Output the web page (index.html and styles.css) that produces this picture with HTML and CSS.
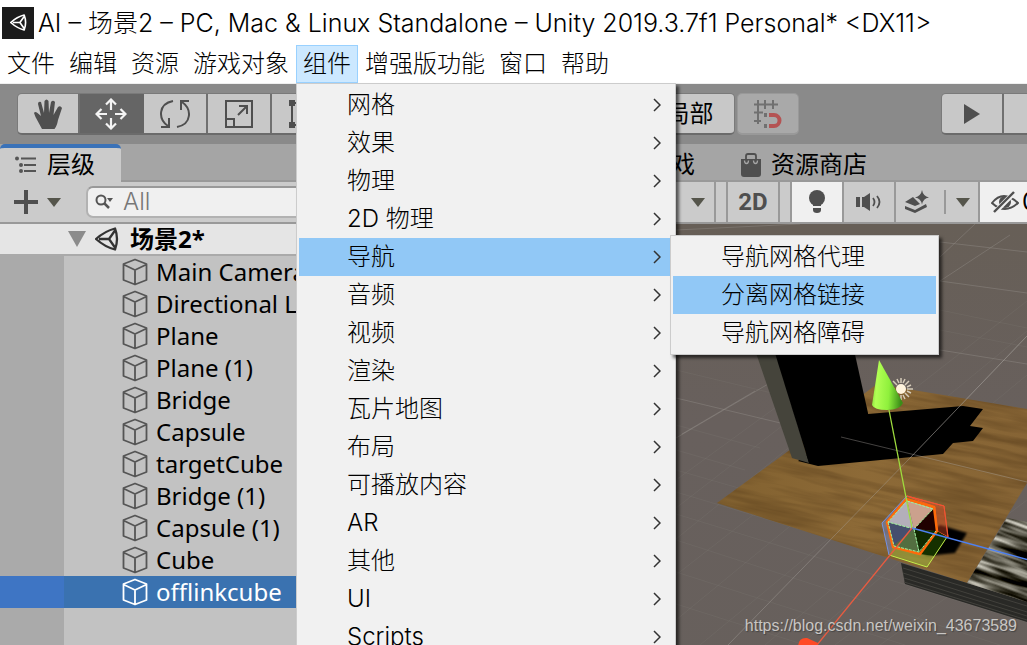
FILE: index.html
```
<!DOCTYPE html>
<html lang="zh-CN">
<head>
  <meta charset="UTF-8" />
  <meta name="viewport" content="width=device-width,initial-scale=1.0"/>
  <title>AI – 场景2 – Unity 2019.3.7f1 Personal</title>
  <link rel="stylesheet" href="styles.css">
</head>
<body>
  <!-- Shared icons -->
  <svg class="defs" aria-hidden="true">
    <symbol id="cube" viewBox="0 0 26 28">
      <path d="M13 1.500 24.500 6v16L13 26.500 1.500 22V6Z M1.500 6.500 13 12 24.500 6.500 M13 12v14" fill="none" stroke="currentColor" stroke-width="1.800" stroke-linejoin="round"/>
    </symbol>
    <symbol id="unity" viewBox="0 0 24 24">
      <path d="M1 12Q10 4 20 1.500 24 12 20 22.500 10 20 1 12Z M4 12h10 M20 3.500 14 12 20 20.500" fill="none" stroke="currentColor" stroke-width="2.300" stroke-linejoin="round"/>
    </symbol>
    <symbol id="arrow" viewBox="0 0 14 9">
      <path d="M0 0h14L7 9Z" fill="#55554b"/>
    </symbol>
    <symbol id="chevron" viewBox="0 0 8 14">
      <path d="M1 1l6 6-6 6" fill="none" stroke="#333" stroke-width="1.500"/>
    </symbol>
  </svg>

  <header class="titlebar">
    <span class="app-icon"><svg width="17" height="17"><use href="#unity"/></svg></span>
    <h1>AI – 场景2 – PC, Mac &amp; Linux Standalone – Unity 2019.3.7f1 Personal* &lt;DX11&gt;</h1>
  </header>

  <nav class="menubar">
    <button>文件</button>
    <button>编辑</button>
    <button>资源</button>
    <button>游戏对象</button>
    <div class="menu-holder">
      <button class="open">组件</button>
      <div class="menu main-menu">
        <button>网格<svg><use href="#chevron"/></svg></button>
        <button>效果<svg><use href="#chevron"/></svg></button>
        <button>物理<svg><use href="#chevron"/></svg></button>
        <button>2D 物理<svg><use href="#chevron"/></svg></button>
        <div class="menu-holder">
          <button class="active">导航<svg><use href="#chevron"/></svg></button>
          <div class="menu sub-menu">
            <button>导航网格代理</button>
            <button class="active">分离网格链接</button>
            <button>导航网格障碍</button>
          </div>
        </div>
        <button>音频<svg><use href="#chevron"/></svg></button>
        <button>视频<svg><use href="#chevron"/></svg></button>
        <button>渲染<svg><use href="#chevron"/></svg></button>
        <button>瓦片地图<svg><use href="#chevron"/></svg></button>
        <button>布局<svg><use href="#chevron"/></svg></button>
        <button>可播放内容<svg><use href="#chevron"/></svg></button>
        <button>AR<svg><use href="#chevron"/></svg></button>
        <button>其他<svg><use href="#chevron"/></svg></button>
        <button>UI<svg><use href="#chevron"/></svg></button>
        <button>Scripts<svg><use href="#chevron"/></svg></button>
      </div>
    </div>
    <button>增强版功能</button>
    <button>窗口</button>
    <button>帮助</button>
  </nav>

  <!-- Main toolbar -->
  <div class="toolbar">
    <div class="group tools">
      <button aria-label="Hand">
        <svg width="30" height="32" viewBox="0 0 30 32"><path d="M9 31 2.500 19 1 15q1-2 3.500 0L8 18 5 6q0-3 3-2l3 11L11.500 3q2-3 4 0L16 15 18 4q2-2.500 4 0L20.500 17 25 9q2.500-2 4 1L25 22q-1 6-3.500 9Z" fill="#4f4f4f"/></svg>
      </button>
      <button class="on" aria-label="Move">
        <svg width="32" height="32" viewBox="0 0 32 32"><path d="M16 12V2M11 6.500l5-5 5 5M16 20v10M11 25.500l5 5 5-5M12 16H2M6.500 11l-5 5 5 5M20 16h10M25.500 11l5 5-5 5" fill="none" stroke="#f4f4f4" stroke-width="2.200"/></svg>
      </button>
      <button aria-label="Rotate">
        <svg width="30" height="30" viewBox="0 0 30 30"><path d="M13 2C-2 5-2 20 8 27M1 28h8v-9M17 28C32 25 32 10 22 3M29 2h-8v9" fill="none" stroke="#4f4f4f" stroke-width="2"/></svg>
      </button>
      <button aria-label="Scale">
        <svg width="30" height="30" viewBox="0 0 30 30"><path d="M2 2h26v26H2ZM2 20h8v8M14 16l9-9M15 7h8v8" fill="none" stroke="#4f4f4f" stroke-width="2"/></svg>
      </button>
      <button aria-label="Rect">
        <svg width="30" height="30" viewBox="0 0 30 30"><path d="M4 4h22v22H4Z" fill="none" stroke="#4f4f4f" stroke-width="2"/><path d="M1 1h6v6H1ZM23 1h6v6h-6ZM1 23h6v6H1ZM23 23h6v6h-6Z" fill="#4f4f4f"/></svg>
      </button>
      <button aria-label="Transform"></button>
    </div>
    <div class="group pivot">
      <button>中心</button>
      <button>局部</button>
    </div>
    <div class="group snap">
      <button aria-label="Snap" disabled>
        <svg width="30" height="30" viewBox="0 0 30 30"><path d="M1 5.500h24M5 1v24M12 1v9M20 1v9M1 13.500h9M1 22h7" fill="none" stroke="#707070" stroke-width="2"/><path d="M11 14h3v4h-3ZM11 25h3v4h-3Z" fill="#707070"/><path d="M16 16h5a5 5 0 0 1 0 11h-5" fill="none" stroke="#b45353" stroke-width="4"/></svg>
      </button>
    </div>
    <div class="group play">
      <button aria-label="Play"><svg width="18" height="20" viewBox="0 0 18 20"><path d="M1 0 17 10 1 20Z" fill="#4f4f4f"/></svg></button>
      <button aria-label="Pause"><svg width="18" height="20" viewBox="0 0 18 20"><path d="M2 0h5v20H2ZM11 0h5v20h-5Z" fill="#4f4f4f"/></svg></button>
    </div>
  </div>

  <main class="workspace">
    <!-- Hierarchy -->
    <section class="hierarchy">
      <div class="tabs">
        <button class="tab current">
          <svg width="22" height="18" viewBox="0 0 22 18"><path d="M6 2.500h15M9 9h12M9 15h12" stroke="#555" stroke-width="2"/><circle cx="2" cy="2.500" r="2" fill="#555"/><circle cx="6" cy="9" r="2" fill="#555"/><circle cx="6" cy="15" r="2" fill="#555"/></svg>
          层级
        </button>
      </div>
      <div class="panel-bar">
        <button class="add" aria-label="Add">
          <svg width="24" height="24" viewBox="0 0 24 24"><path d="M12 0v24M0 12h24" stroke="#4f4f4f" stroke-width="4"/></svg>
          <svg width="14" height="9"><use href="#arrow"/></svg>
        </button>
        <label class="search">
          <svg width="19" height="16" viewBox="0 0 19 16"><circle cx="6" cy="6" r="4.500" fill="none" stroke="#555" stroke-width="2"/><path d="M9 9l5 5" stroke="#555" stroke-width="2.500"/><path d="M12 4h6l-3 4Z" fill="#555"/></svg>
          <input type="text" placeholder="All" aria-label="Search">
        </label>
      </div>
      <div class="scene-row">
        <svg width="18" height="16" viewBox="0 0 18 16"><path d="M0 0h18L9 16Z" fill="#8b8b8b"/></svg>
        <svg class="logo" width="24" height="24"><use href="#unity"/></svg>
        <span>场景2*</span>
      </div>
      <ul class="tree">
        <li><svg><use href="#cube"/></svg>Main Camera</li>
        <li><svg><use href="#cube"/></svg>Directional Light</li>
        <li><svg><use href="#cube"/></svg>Plane</li>
        <li><svg><use href="#cube"/></svg>Plane (1)</li>
        <li><svg><use href="#cube"/></svg>Bridge</li>
        <li><svg><use href="#cube"/></svg>Capsule</li>
        <li><svg><use href="#cube"/></svg>targetCube</li>
        <li><svg><use href="#cube"/></svg>Bridge (1)</li>
        <li><svg><use href="#cube"/></svg>Capsule (1)</li>
        <li><svg><use href="#cube"/></svg>Cube</li>
        <li class="selected"><svg><use href="#cube"/></svg>offlinkcube</li>
      </ul>
    </section>

    <!-- Scene view -->
    <section class="scene">
      <div class="tabs">
        <button class="tab"><svg width="20" height="24"></svg>场景</button>
        <button class="tab"><svg width="20" height="24"></svg>游戏</button>
        <button class="tab">
          <svg width="20" height="24" viewBox="0 0 20 24"><path d="M5 7V3q0-2 2-2h6q2 0 2 2v4" fill="none" stroke="#4f4f4f" stroke-width="1.800"/><path d="M0 6h20v15q0 3-3 3H3q-3 0-3-3Z" fill="#4f4f4f"/><path d="M3.500 7.500q0 3 2 3t2-3M12.500 7.500q0 3 2 3t2-3" fill="none" stroke="#a5a5a5" stroke-width="1.300"/></svg>
          资源商店
        </button>
      </div>
      <div class="view-bar">
        <button class="shading" aria-label="Shading mode"><svg width="14" height="9"><use href="#arrow"/></svg></button>
        <button class="mode">2D</button>
        <button class="light on" aria-label="Lighting">
          <svg width="18" height="24" viewBox="0 0 18 24"><circle cx="9" cy="8" r="8" fill="#4f4f4f"/><path d="M5 13h8v3H5ZM5 18h8v2q0 3-4 3t-4-3Z" fill="#4f4f4f"/></svg>
        </button>
        <button class="sound" aria-label="Audio">
          <svg width="26" height="20" viewBox="0 0 26 20"><path d="M0 5h4v10H0ZM6 5h2l6-4v18l-6-4H6Z" fill="#4f4f4f"/><path d="M17 6q3 4 0 8M21 4q5 6 0 12" fill="none" stroke="#4f4f4f" stroke-width="1.800"/></svg>
        </button>
        <button class="effects" aria-label="Effects">
          <svg width="26" height="24" viewBox="0 0 26 24"><path d="M18 0q1 6 7 7.500-6 1-7 7-1-6-7-7Q17 6 18 0ZM9 7l3 3 4 4-5 2L1 12ZM1 16l10 4 11-6 1 3-12 6L1 19Z" fill="#4f4f4f"/></svg>
          <span class="split"></span>
          <svg width="14" height="9"><use href="#arrow"/></svg>
        </button>
        <button class="hidden-count on">
          <svg width="28" height="22" viewBox="0 0 28 22"><path d="M1 12Q12-2 27 12 14 24 1 12Z" fill="none" stroke="#4f4f4f" stroke-width="2"/><circle cx="14" cy="11" r="6" fill="#4f4f4f"/><path d="M4 21 24 1" stroke="#f0f0f0" stroke-width="5"/><path d="M3 21 23 1" stroke="#4f4f4f" stroke-width="2.400"/></svg>
          0
        </button>
      </div>
      <div class="viewport">
        <svg viewBox="470 224 557 421" preserveAspectRatio="xMinYMin slice">
          <defs>
            <linearGradient id="ground" x1="0" y1="0" x2="0" y2="1">
              <stop offset="0" stop-color="#675f57"/><stop offset=".4" stop-color="#68605d"/><stop offset="1" stop-color="#67605c"/>
            </linearGradient>
            <linearGradient id="cone" x1="0" y1="0" x2="1" y2="0.100">
              <stop offset="0" stop-color="#79d233"/><stop offset=".2" stop-color="#b2ff54"/><stop offset=".6" stop-color="#8ff03c"/><stop offset="1" stop-color="#3b8d18"/>
            </linearGradient>
            <linearGradient id="plank" x1="0" y1="0" x2="1" y2="0">
              <stop offset="0" stop-color="#80602f"/><stop offset=".5" stop-color="#8d6a37"/><stop offset="1" stop-color="#866435"/>
            </linearGradient>
            <filter id="soft"><feGaussianBlur stdDeviation="1"/></filter>
            <filter id="grain" x="0" y="0" width="1" height="1" color-interpolation-filters="sRGB">
              <feTurbulence type="fractalNoise" baseFrequency="0.012 0.140" numOctaves="3" seed="4"/>
              <feColorMatrix values="0 0 0 0 .3  0 0 0 0 .2  0 0 0 0 .08  1 0 0 0 -.35"/>
            </filter>
            <filter id="rough" x="0" y="0" width="1" height="1" color-interpolation-filters="sRGB">
              <feTurbulence type="fractalNoise" baseFrequency="0.018 0.160" numOctaves="2" seed="9"/>
              <feColorMatrix values="2 0 0 0 -.640  2 0 0 0 -.650  2 0 0 0 -.700  0 0 0 0 1"/>
            </filter>
            <clipPath id="wood"><path d="M717 503 787 452 877 384 1027 409V483L967 583Z"/></clipPath>
            <clipPath id="stone"><path d="M1007 518 1040 524V606L967 583Z"/></clipPath>
          </defs>
          <rect x="470" y="224" width="700" height="500" fill="url(#ground)"/>
          <!-- floor grid -->
          <g fill="none" stroke="#96928d" stroke-opacity=".4">
            <path d="M940 242 1027 252M940 281 1027 293M676 398 1027 482M676 230 800 224M940 281 1010 235M940 257 975 224M676 438 775 380M940 350 1027 364M682 434 755 391"/>
          </g>
          <g fill="none" stroke="#96928d" stroke-opacity=".13">
            <path d="M676 470 940 546M676 492 900 559M676 514 1027 622M676 540 1000 645M676 572 905 645M676 604 805 645M676 425 760 448M676 450 745 470M940 310 1027 328M940 330 1027 347M676 480 790 397M676 508 800 412M676 539 850 398M676 575 1027 301M676 620 1027 331M700 645 1027 375M765 645 1027 425M800 645 1027 455M835 645 1027 500M880 645 1027 540M676 370 780 395"/>
          </g>
          <!-- wooden plane -->
          <g clip-path="url(#wood)">
            <rect x="700" y="380" width="330" height="210" fill="url(#plank)"/>
            <rect x="680" y="300" width="420" height="340" filter="url(#grain)" transform="rotate(12 860 480)"/>
          </g>
          <!-- stone block -->
          <path d="M901 563 967 583 1040 606V626L905 584Z" fill="#292926"/>
          <path d="M903 568 1027 606M903 573 1027 612M904 578 1027 616M904 582 1027 620" stroke="#42413c" stroke-width="1" fill="none"/>
          <g clip-path="url(#stone)">
            <rect x="930" y="490" width="150" height="150" filter="url(#rough)" transform="rotate(20 1000 560)"/>
          </g>
          <!-- pillar and shadow -->
          <path d="M860 414 868 414 963 406 983 409 970 426 983 428 973 441 953 443 943 454 818 466 798 461Z"/>
          <path d="M755 350H775L809 463 792 458Z" fill="#45443b"/>
          <path d="M774 350H854L868 413 870 445 809 463Z"/>
          <path d="M940 525 967 533 955 553 927 556 910 545Z" filter="url(#soft)"/>
          <path d="M1027 336 910 458 728 645M841 437 1027 482" stroke="#a9a6a0" stroke-opacity=".4" fill="none"/>
          <path d="M1027 336 910 458" stroke="#a9a6a0" stroke-opacity=".3" fill="none"/>
          <!-- light gizmo -->
          <path d="M901 378v5M901 395v5M890 389h5M907 389h6M893 381l4 4M905 393l4 4M893 397l4-4M905 385l4-4M897 379l2 4M905 379l-2 4M911 385l-4 2M911 393l-4-2M905 399l-2-4" stroke="#d5cbb9" stroke-width="1.500"/>
          <circle cx="901" cy="389" r="5" fill="#fff3dc"/>
          <!-- selected cube -->
          <path d="M907 496 944 506 948 537 937 531 935 507Z" fill="#e64b28" fill-opacity=".4" stroke="#f4542c"/>
          <path d="M889 555 893 547 920 554 947 537 927 567Z" fill="#9eb83c" fill-opacity=".5"/>
          <path d="M937 531 947 537 935 556 920 554Z" fill="#153000"/>
          <path d="M907 496 882 523 889 555 893 547 887 522Z" fill="#6f7eb0" fill-opacity=".6"/>
          <path d="M887 522 907 500 914 529Z" fill="#b3afba"/>
          <path d="M907 500 934 508 914 529Z" fill="#cba18d"/>
          <path d="M934 508 937 531 914 529Z" fill="#200000"/>
          <path d="M914 529 937 531 920 553Z" fill="#102900"/>
          <path d="M914 529 920 553 893 546Z" fill="#536e40"/>
          <path d="M887 522 914 529 893 546Z" fill="#454f6e"/>
          <path d="M906 499 934 507 937 531 920 554 893 547 887 522Z" fill="none" stroke="#ff6a0a" stroke-width="2.500"/>
          <path d="M907 501 933 509 914 529 888 522ZM888 522 894 546 919 552 936 531M914 529 919 552" fill="none" stroke="#9bf5a0" stroke-dasharray="3 1"/>
          <path d="M907 496 882 523 889 555" fill="none" stroke="#7392e6"/>
          <path d="M889 555 927 567 947 537" fill="none" stroke="#c3f04a"/>
          <path d="M907 496 944 506 948 537" fill="none" stroke="#ef5435"/>
          <!-- axes -->
          <path d="M889 410 912 528" stroke="#9fdc3e" stroke-width="1.300"/>
          <path d="M912 528 1027 559.500" stroke="#4e80f0" stroke-width="1.300"/>
          <path d="M912 528 817 645" stroke="#e85b40" stroke-width="1.300"/>
          <path d="M798 648q0-11 9-10l11 5v5Z" fill="#ff4a26"/>
          <path d="M879 360 872 405q2 5 15 5t16-7Z" fill="url(#cone)"/>
        </svg>
        <p class="watermark">https://blog.csdn.net/weixin_43673589</p>
      </div>
    </section>
  </main>
</body>
</html>
```
FILE: styles.css
```
/* ---------- Global Styles ---------- */
* {
  box-sizing: border-box;
}
body {
  margin: 0;
  height: 100vh;
  overflow: hidden;
  display: flex;
  flex-direction: column;
  background: #8a8a8a;
  color: #000;
  font-family: "Inter", "Noto Sans CJK SC", sans-serif;
  font-size: 24px;
  font-weight: 300;
}
button {
  margin: 0;
  padding: 0;
  border: none;
  background: none;
  color: inherit;
  font: inherit;
  line-height: 32px;
  white-space: nowrap;
}
svg {
  display: block;
  flex: none;
}
.defs {
  position: absolute;
  width: 0;
  height: 0;
}

/* ---------- Title & Menu Bar ---------- */
.titlebar {
  display: flex;
  align-items: center;
  gap: 4px;
  flex: 0 0 45px;
  padding-left: 2px;
  background: #fff;
}
.titlebar h1 {
  margin: 0;
  font-size: 25px;
  font-weight: 300;
  line-height: 32px;
  white-space: nowrap;
}
.app-icon {
  display: flex;
  align-items: center;
  justify-content: center;
  width: 32px;
  height: 32px;
  background: #1b1b1b;
  color: #fff;
}
.menubar {
  display: flex;
  flex: 0 0 39px;
  background: #fff;
  border-bottom: 1px solid #efefef;
}
.menubar > button,
.menu-holder > .open {
  height: 38px;
  padding: 0 7px;
  line-height: 36px;
}
.menu-holder {
  position: relative;
}
.menu-holder > .open {
  background: #cce8ff;
  box-shadow: inset 0 0 0 1px #99d1ff;
}

/* ---------- Drop-down Menus ---------- */
.menu {
  position: absolute;
  z-index: 2;
  padding: 2px;
  background: #f1f1f1;
  border: 1px solid #ccc;
  box-shadow: 3px 3px 3px rgba(0, 0, 0, 0.6);
}
.menu button {
  display: flex;
  align-items: center;
  justify-content: space-between;
  width: 100%;
  height: 38px;
  padding: 0 12px 0 48px;
}
.menu button svg {
  width: 8px;
  height: 14px;
}
.menu .active {
  background: #91c8f6;
}
.main-menu {
  top: 38px;
  left: 0;
  width: 380px;
}
.sub-menu {
  top: -3px;
  left: 371px;
  width: 269px;
}

/* ---------- Toolbar ---------- */
.toolbar {
  display: flex;
  align-items: center;
  flex: 0 0 60px;
  padding-left: 17px;
  background: #8a8a8a;
}
.group {
  display: flex;
  flex: none;
  height: 42px;
  border: 1px solid #7a7a7a;
  border-bottom: 2px solid #6b6b6b;
  border-radius: 5px;
  overflow: hidden;
}
.group button {
  display: flex;
  align-items: center;
  justify-content: center;
  width: 64px;
  background: #c8c8c8;
  border-right: 2px solid #707070;
  font-weight: 400;
}
.group button:first-child {
  width: 62px;
}
.group button:last-child {
  border-right: none;
}
.group .on {
  background: #656565;
  border-color: #656565;
}
.pivot {
  margin-left: 106px;
}
.pivot button,
.pivot button:first-child {
  width: 113px;
  padding-left: 24px;
}
.snap {
  margin-left: 2px;
  border-color: #999;
}
.snap button:first-child {
  width: 60px;
  background: #a9a9a9;
}
.play {
  margin-left: 142px;
}

/* ---------- Panels ---------- */
.workspace {
  display: flex;
  flex: 1;
  min-height: 0;
}
.hierarchy {
  display: flex;
  flex-direction: column;
  flex: 0 0 470px;
  min-width: 0;
  background: #c2c2c2;
}
.scene {
  display: flex;
  flex-direction: column;
  flex: 1;
  min-width: 0;
}
.tabs {
  display: flex;
  flex: 0 0 38px;
  background: #a5a5a5;
  box-shadow: inset 0 -2px #999;
}
.tab {
  display: flex;
  align-items: center;
  gap: 10px;
  padding: 4px 23px 0;
  font-weight: 400;
}
.tab.current {
  padding: 0 26px 0 15px;
  background: #cbcbcb;
  border-top: 4px solid #3a72b8;
  border-radius: 5px 5px 0 0;
}
.panel-bar {
  display: flex;
  align-items: center;
  gap: 25px;
  flex: 0 0 42px;
  padding: 0 14px;
  background: #cbcbcb;
  border-bottom: 2px solid #999;
}
.add {
  display: flex;
  align-items: center;
  gap: 9px;
}
.search {
  display: flex;
  align-items: center;
  flex: 1;
  min-width: 0;
  gap: 9px;
  height: 32px;
  padding-left: 7px;
  background: #f0f0f0;
  border: 2px solid #b2b2b2;
  border-top-color: #999;
  border-radius: 7px;
}
.search input {
  flex: 1;
  min-width: 0;
  height: 28px;
  padding: 0 0 2px;
  border: none;
  outline: none;
  background: none;
  font: inherit;
}
.search input::placeholder {
  color: #777;
  opacity: 1;
}

/* ---------- Hierarchy ---------- */
.scene-row {
  display: flex;
  align-items: center;
  gap: 9px;
  flex: 0 0 32px;
  padding-left: 68px;
  background: #e5e5e5;
  border-bottom: 2px solid #aaa;
  font-family: "Noto Sans", "Noto Sans CJK SC", sans-serif;
  font-weight: 700;
  line-height: 30px;
}
.scene-row .logo {
  margin-right: 2px;
  color: #333;
}
.tree {
  flex: 1;
  margin: 0;
  padding: 0;
  list-style: none;
  background: linear-gradient(to right, #aaa 64px, #c2c2c2 64px);
  font-family: "Noto Sans", sans-serif;
  font-weight: 400;
}
.tree li {
  display: flex;
  align-items: center;
  gap: 8px;
  height: 32px;
  padding-left: 122px;
  line-height: 30px;
}
.tree svg {
  width: 26px;
  height: 28px;
  color: #555;
}
.tree .selected {
  background: linear-gradient(to right, #3e75c4 64px, #3a72b0 64px);
  color: #fff;
}
.tree .selected svg {
  color: #fff;
}

/* ---------- Scene View ---------- */
.view-bar {
  display: flex;
  flex: 0 0 42px;
  background: #cbcbcb;
  border-bottom: 2px solid #999;
}
.view-bar button {
  display: flex;
  align-items: center;
  justify-content: center;
  flex: none;
  width: 52px;
  border-right: 2px solid #999;
}
.view-bar .on {
  background: #f0f0f0;
}
.view-bar .shading {
  justify-content: flex-end;
  width: 246px;
  padding-right: 9px;
}
.view-bar .mode {
  width: 54px;
  margin: 0 10px;
  border-left: 2px solid #999;
  color: #4f4f4f;
  font-family: "Roboto", sans-serif;
  font-weight: 700;
}
.view-bar .light {
  width: 54px;
  border-left: 2px solid #999;
}
.view-bar .effects {
  gap: 10px;
  width: 84px;
}
.split {
  width: 2px;
  height: 24px;
  margin-left: 4px;
  background: #999;
}
.view-bar .hidden-count {
  flex: 1;
  justify-content: flex-start;
  gap: 3px;
  min-width: 0;
  padding-left: 11px;
  border-right: none;
  font-weight: 400;
  overflow: hidden;
}
.viewport {
  position: relative;
  flex: 1;
  min-height: 0;
  overflow: hidden;
}
.viewport svg {
  width: 100%;
  height: 100%;
}
.watermark {
  position: absolute;
  right: 10px;
  bottom: 9px;
  margin: 0;
  color: #c9c6c3;
  font-family: "Liberation Sans", sans-serif;
  font-size: 16px;
  font-weight: 400;
  line-height: 20px;
  text-shadow: 1px 1px 1px #444;
}
```
